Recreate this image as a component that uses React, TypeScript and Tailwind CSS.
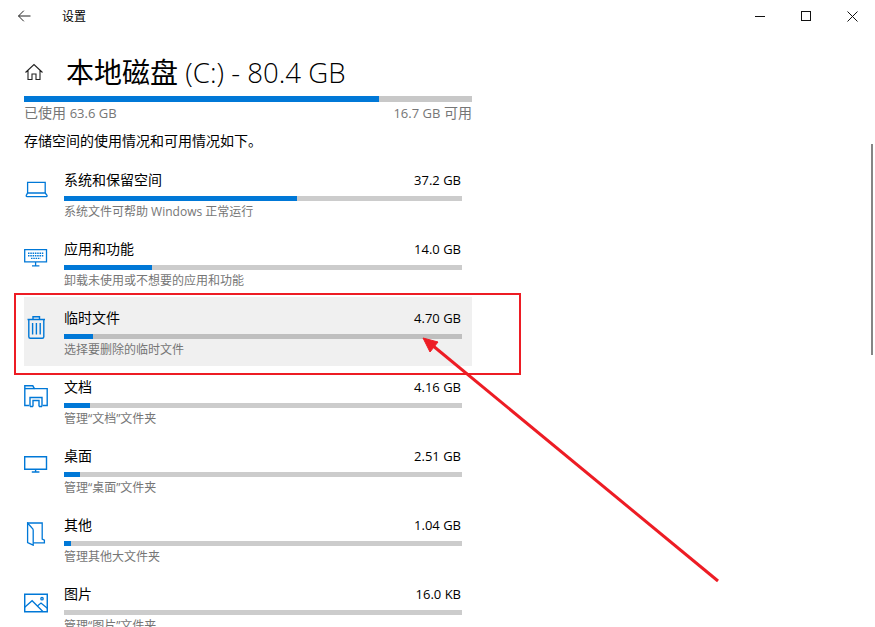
import React from "react";

const FONT = "font-['Open_Sans','Noto_Sans_CJK_SC',sans-serif]";

const LaptopIcon = () => (
  <svg width="24" height="24" viewBox="0 0 24 24" fill="none" stroke="#0078d7" strokeWidth="1.3">
    <path d="M3.6 16V5.4h17.6V16" />
    <path d="M3.6 16h17.6l1.8 2.4c.3.7 0 1.3-.7 1.3H3c-.7 0-1-.6-.7-1.3L3.6 16z" />
  </svg>
);

const KeyboardIcon = () => (
  <svg width="24" height="24" viewBox="0 0 24 24" fill="none" stroke="#0078d7" strokeWidth="1.3">
    <path d="M.7 3.7h21.8v12.2H.7z" />
    <path d="M11.6 15.9v3.6M8 19.9h7.4" />
    <path d="M4 7.2h15.5M4 9.8h15.5M7 12.4h9.5" strokeWidth="1.4" strokeDasharray="1.5 .8" />
  </svg>
);

const TrashIcon = () => (
  <svg width="24" height="26" viewBox="0 0 24 26" fill="none" stroke="#0078d7" strokeWidth="1.4">
    <path d="M3.5 5.5h17.5M9 5.5V2.7h6.5v2.8" />
    <path d="M4.8 5.5v17.3c0 .9.6 1.5 1.5 1.5h12c.9 0 1.5-.6 1.5-1.5V5.5" />
    <path d="M8.6 9v11.6M12.4 9v11.6M16.2 9v11.6" />
  </svg>
);

const DocFolderIcon = () => (
  <svg width="24" height="24" viewBox="0 0 24 24" fill="none" stroke="#0078d7" strokeWidth="1.4">
    <path d="M5 21.5H.8V1.8h8l1.6 2.8h12.8v16.9h-4.4" />
    <path d="M.8 4.6h9.6" />
    <path d="M6 22.5v-9h12v9M9 22.5v-6h6v6" />
    <path d="M6 22.5h3M15 22.5h3" />
  </svg>
);

const MonitorIcon = () => (
  <svg width="24" height="24" viewBox="0 0 24 24" fill="none" stroke="#0078d7" strokeWidth="1.4">
    <path d="M.7 3.7h21.8v12.6H.7z" />
    <path d="M11.6 16.3v2.6M7.8 19h7.6" />
  </svg>
);

const OtherIcon = () => (
  <svg width="24" height="24" viewBox="0 0 24 24" fill="none" stroke="#0078d7" strokeWidth="1.3">
    <path d="M3.6 1h14.6v16l2.2 1.2v2.6H9.2" />
    <path d="M3.6 1v19.6l5.6 2.6v-15c0-1-.4-1.7-1.2-2.3L3.6 1z" />
  </svg>
);

const PictureIcon = () => (
  <svg width="24" height="24" viewBox="0 0 24 24" fill="none" stroke="#0078d7" strokeWidth="1.3">
    <path d="M.7 3.2h22.6v17.6H.7z" strokeWidth="1.5" />
    <path d="M.7 16.3l7.4-6.6 11 11" />
    <path d="M13.4 14.9l3.6-2.8 6.3 5.2" />
    <circle cx="18" cy="7.7" r="1.2" />
  </svg>
);

const rows = [
  { title: "系统和保留空间", sub: "系统文件可帮助 Windows 正常运行", size: "37.2 GB", fill: "w-[233px]", icon: <LaptopIcon /> },
  { title: "应用和功能", sub: "卸载未使用或不想要的应用和功能", size: "14.0 GB", fill: "w-[88px]", icon: <KeyboardIcon /> },
  { title: "临时文件", sub: "选择要删除的临时文件", size: "4.70 GB", fill: "w-[29px]", icon: <TrashIcon />, active: true },
  { title: "文档", sub: "管理“文档”文件夹", size: "4.16 GB", fill: "w-[26px]", icon: <DocFolderIcon /> },
  { title: "桌面", sub: "管理“桌面”文件夹", size: "2.51 GB", fill: "w-[16px]", icon: <MonitorIcon /> },
  { title: "其他", sub: "管理其他大文件夹", size: "1.04 GB", fill: "w-[7px]", icon: <OtherIcon /> },
  { title: "图片", sub: "管理“图片”文件夹", size: "16.0 KB", fill: "w-0", icon: <PictureIcon /> },
];

export default function App() {
  return (
    <div className={`relative h-[627px] w-[875px] overflow-hidden bg-white ${FONT} text-black`}>
      {/* title bar */}
      <div className="flex h-[32px] items-center">
        <div className="flex w-[48px] justify-center">
          <svg width="14" height="14" viewBox="0 0 14 14" fill="none" stroke="#222" strokeWidth="1">
            <path d="M1.5 7h12M6.8 1.7L1.5 7l5.3 5.3" />
          </svg>
        </div>
        <span className="ml-[14px] mt-[2px] text-[12px]">设置</span>
        <div className="ml-auto flex items-center">
          <div className="flex w-[46px] justify-center">
            <div className="h-px w-[10px] bg-[#111]" />
          </div>
          <div className="flex w-[46px] justify-center">
            <div className="h-[10px] w-[10px] border border-[#111]" />
          </div>
          <div className="flex w-[46px] justify-center">
            <svg width="11" height="11" viewBox="0 0 11 11" stroke="#111" strokeWidth="1">
              <path d="M.5.5l10 10M10.5.5l-10 10" />
            </svg>
          </div>
        </div>
      </div>

      <div className="pl-[24px]">
        {/* heading */}
        <div className="mt-[20px] flex h-[40px] w-[448px] items-center">
          <svg width="20" height="20" viewBox="0 0 20 20" fill="none" stroke="#222" strokeWidth="1.1">
            <path d="M1.5 10.5L10 2.5l8.5 8M4 8.5v9h4v-5.5h4v5.5h4v-9" />
          </svg>
          <h1 className="ml-[22px] text-[28px] leading-[38px]">
            本地磁盘 <span className="text-[27.6px] font-light">(C:) - 80.4 GB</span>
          </h1>
        </div>

        {/* usage bar */}
        <div className="mt-[4px] h-[6px] w-[448px] bg-[#c8c8c8]">
          <div className="h-full w-[355px] bg-[#0078d7]" />
        </div>
        <div className="mt-[2px] flex w-[448px] justify-between text-[14px] leading-[18px] text-[#767676]">
          <span>
            已使用 <span className="text-[13px]">63.6 GB</span>
          </span>
          <span>
            <span className="text-[13px]">16.7 GB</span> 可用
          </span>
        </div>
        <p className="mt-[9px] text-[14px] leading-[20px]">存储空间的使用情况和可用情况如下。</p>

        {/* categories */}
        <div className="mt-[8px] w-[448px]">
          {rows.map((r) => (
            <div key={r.title} className={`flex h-[69px] items-start ${r.active ? "bg-[#f0f0f0]" : ""}`}>
              <div className="mt-[18px] flex h-[24px] w-[24px] items-center justify-center">{r.icon}</div>
              <div className="ml-[16px] mt-[12px] w-[398px]">
                <div className="flex items-baseline justify-between text-[14px] leading-[18px]">
                  <span>{r.title}</span>
                  <span className="pr-px text-[13px]">{r.size}</span>
                </div>
                <div className={`mt-[7px] h-[5px] ${r.active ? "bg-[#bfbfbf]" : "bg-[#cccccc]"}`}>
                  <div className={`h-full bg-[#0078d7] ${r.fill}`} />
                </div>
                <div className="mt-[2px] text-[12px] leading-[18px] text-[#767676]">{r.sub}</div>
              </div>
            </div>
          ))}
        </div>
      </div>

      {/* scrollbar */}
      <div className="absolute left-[871px] top-[144px] h-[211px] w-[2px] bg-[#858585]" />

      {/* annotation */}
      <div className="absolute left-[14px] top-[293px] h-[82px] w-[507px] border-2 border-[#ed1c24]" />
      <svg className="absolute left-0 top-0" width="875" height="627" fill="none">
        <path d="M718 581L432 345" stroke="#ed1c24" strokeWidth="3" />
        <path d="M423 338L438 342L430 352Z" fill="#ed1c24" stroke="#ed1c24" strokeWidth="1" />
      </svg>
    </div>
  );
}
